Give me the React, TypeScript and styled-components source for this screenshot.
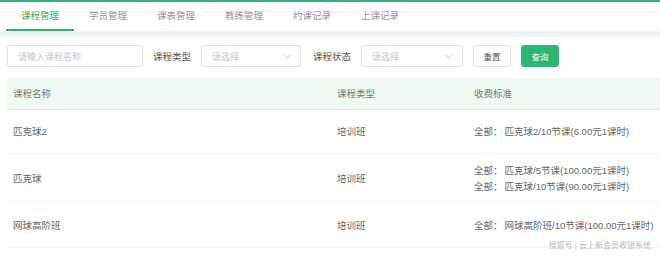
import React from "react";
import styled, { createGlobalStyle } from "styled-components";

const GlobalStyle = createGlobalStyle`
  html, body {
    margin: 0;
    padding: 0;
    background: #ffffff;
    font-family: "Liberation Sans", "Noto Sans CJK SC", sans-serif;
  }
`;

const Page = styled.div`
  width: 660px;
  height: 257px;
  overflow: hidden;
  position: relative;
  display: flex;
  flex-direction: column;
`;

const TopBar = styled.div`
  height: 2px;
  background: #34b37a;
`;

const Tabs = styled.div`
  display: flex;
  height: 29px;
  padding-left: 6px;
  background: #fff;
`;

const Tab = styled.div<{ $active?: boolean }>`
  width: 68px;
  display: flex;
  align-items: center;
  justify-content: center;
  font-size: 9.5px;
  color: ${(p) => (p.$active ? "#2fae6b" : "#919399")};
  border-bottom: 2px solid ${(p) => (p.$active ? "#2fae6b" : "transparent")};
  box-sizing: border-box;
  padding-bottom: 1px;
`;

const Band = styled.div`
  height: 6px;
  background: #eff1f4;
`;

const Content = styled.div`
  padding: 8px 0 0 7px;
  display: flex;
  flex-direction: column;
  gap: 11px;
`;

const Filters = styled.div`
  display: flex;
  align-items: center;
  height: 22px;
`;

const Input = styled.div<{ $w: number }>`
  width: ${(p) => p.$w}px;
  height: 22px;
  box-sizing: border-box;
  border: 1px solid #e1e3e8;
  border-radius: 3px;
  display: flex;
  align-items: center;
  justify-content: space-between;
  padding: 0 9px 0 10px;
  font-size: 9px;
  color: #c3c6cc;
`;

const Label = styled.span<{ $ml: number }>`
  margin: 0 10px 0 ${(p) => p.$ml}px;
  font-size: 9.5px;
  color: #555;
`;

const Button = styled.div<{ $primary?: boolean; $ml: number }>`
  margin-left: ${(p) => p.$ml}px;
  width: 38px;
  height: 22px;
  box-sizing: border-box;
  border-radius: 3px;
  display: flex;
  align-items: center;
  justify-content: center;
  font-size: 8.5px;
  background: ${(p) => (p.$primary ? "#2bb673" : "#fff")};
  color: ${(p) => (p.$primary ? "#fff" : "#555")};
  border: 1px solid ${(p) => (p.$primary ? "#2bb673" : "#e1e3e8")};
`;

const Table = styled.div`
  display: flex;
  flex-direction: column;
`;

const Row = styled.div<{ $h: number; $head?: boolean }>`
  display: grid;
  grid-template-columns: 324px 137px 1fr;
  align-items: center;
  height: ${(p) => p.$h}px;
  background: ${(p) => (p.$head ? "#effaf3" : "#fff")};
  border-bottom: 1px solid ${(p) => (p.$head ? "#cdebd9" : "#f0f1f3")};
  font-size: 9.5px;
  color: ${(p) => (p.$head ? "#777" : "#666")};
`;

const Cell = styled.div`
  padding-left: 6px;
  line-height: 16px;
`;

const Fee = styled.div`
  white-space: nowrap;
  span {
    margin-right: 2px;
  }
`;

const Watermark = styled.div`
  position: absolute;
  right: 9px;
  bottom: 7px;
  font-size: 8px;
  color: #b9bbbf;
`;

const Chevron = () => (
  <svg width="8" height="5" viewBox="0 0 8 5">
    <path d="M1 1 L4 4 L7 1" fill="none" stroke="#c3c6cc" strokeWidth="0.9" />
  </svg>
);

const rows = [
  { name: "匹克球2", type: "培训班", fees: ["匹克球2/10节课(6.00元1课时)"], h: 43 },
  {
    name: "匹克球",
    type: "培训班",
    fees: ["匹克球/5节课(100.00元1课时)", "匹克球/10节课(90.00元1课时)"],
    h: 49,
  },
  { name: "网球高阶班", type: "培训班", fees: ["网球高阶班/10节课(100.00元1课时)"], h: 43 },
];

export default function App() {
  return (
    <Page>
      <GlobalStyle />
      <TopBar />
      <Tabs>
        {["课程管理", "学员管理", "课表管理", "教练管理", "约课记录", "上课记录"].map((t, i) => (
          <Tab key={t} $active={i === 0}>
            {t}
          </Tab>
        ))}
      </Tabs>
      <Band />
      <Content>
        <Filters>
          <Input $w={136}>请输入课程名称</Input>
          <Label $ml={10}>课程类型</Label>
          <Input $w={100}>
            请选择
            <Chevron />
          </Input>
          <Label $ml={12}>课程状态</Label>
          <Input $w={102}>
            请选择
            <Chevron />
          </Input>
          <Button $ml={10}>重置</Button>
          <Button $ml={10} $primary>
            查询
          </Button>
        </Filters>
        <Table>
          <Row $h={31} $head>
            <Cell>课程名称</Cell>
            <Cell>课程类型</Cell>
            <Cell>收费标准</Cell>
          </Row>
          {rows.map((r) => (
            <Row key={r.name} $h={r.h}>
              <Cell>{r.name}</Cell>
              <Cell>{r.type}</Cell>
              <Cell>
                {r.fees.map((f) => (
                  <Fee key={f}>
                    <span>全部：</span>
                    {f}
                  </Fee>
                ))}
              </Cell>
            </Row>
          ))}
        </Table>
      </Content>
      <Watermark>搜狐号 | 云上新会员收银系统</Watermark>
    </Page>
  );
}
